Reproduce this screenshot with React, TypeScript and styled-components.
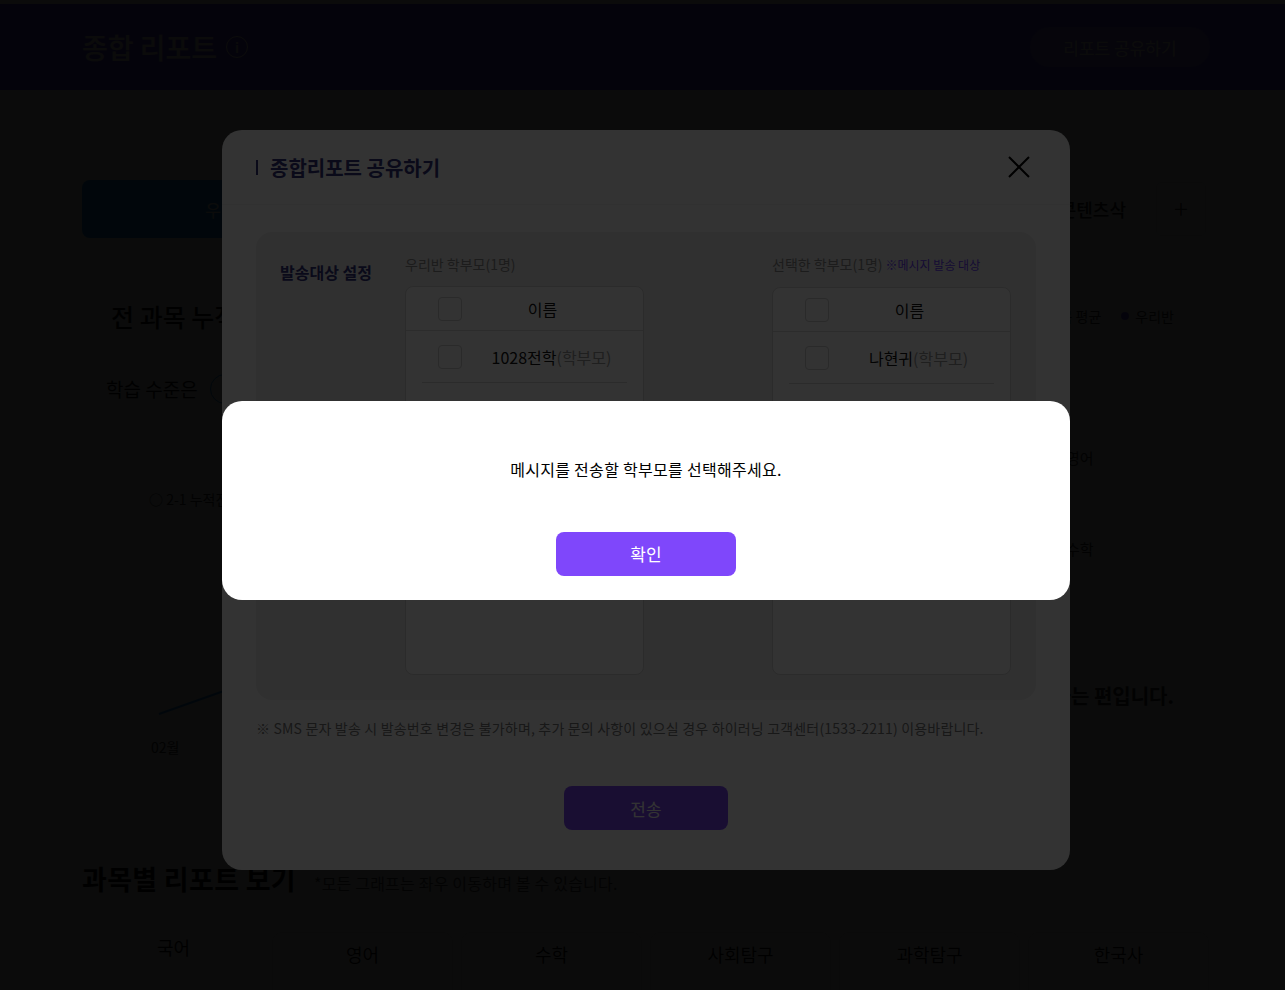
import styled, { createGlobalStyle } from "styled-components";

const GlobalStyle = createGlobalStyle`
  html, body {
    margin: 0;
    padding: 0;
  }
  body {
    background: #eff4f5;
    font-family: "Noto Sans CJK KR", "Noto Sans", sans-serif;
    color: #111;
  }
  * {
    box-sizing: border-box;
  }
`;

/* ---------- report page (behind the dialogs) ---------- */

const TopStrip = styled.div`
  height: 4px;
  background: #f7f7f7;
`;

const HeaderBar = styled.header`
  height: 86px;
  background: #6a55ee;
`;

const HeaderInner = styled.div`
  width: 1123px;
  height: 100%;
  margin: 0 auto;
  display: flex;
  align-items: center;
  justify-content: space-between;
`;

const PageTitle = styled.h1`
  margin: 0 0 0 1px;
  display: flex;
  align-items: center;
  gap: 9px;
  font-size: 28px;
  font-weight: 500;
  color: #fff;
`;

const InfoIcon = styled.span`
  width: 22px;
  height: 22px;
  border: 1.5px solid #fff;
  border-radius: 50%;
  display: flex;
  align-items: center;
  justify-content: center;
  font-size: 14px;
  line-height: 1;
`;

const ShareButton = styled.button`
  width: 180px;
  height: 40px;
  margin-right: -6px;
  border: none;
  border-radius: 20px;
  background: rgba(255, 255, 255, 0.16);
  color: #fff;
  font-family: inherit;
  font-size: 17px;
`;

const Main = styled.main`
  width: 1123px;
  margin: 0 auto;
`;

const TabRow = styled.div`
  margin-top: 90px;
  height: 58px;
  display: flex;
  align-items: center;
`;

const ClassTab = styled.div<{ $active?: boolean }>`
  width: 344px;
  height: 58px;
  margin-left: 1px;
  border-radius: 8px;
  display: flex;
  align-items: center;
  justify-content: center;
  font-size: 17px;
  background: ${(p) => (p.$active ? "#1a93ef" : "transparent")};
  color: ${(p) => (p.$active ? "#fff" : "#222")};
`;

const TabSpacer = styled.div`
  flex: 1;
`;

const TextTab = styled.div`
  font-size: 18px;
  font-weight: 500;
  color: #222;
  margin-right: 30px;
`;

const AddBox = styled.div`
  width: 50px;
  height: 54px;
  margin-right: -2px;
  border-radius: 6px;
  background: #fff;
  border: 1px solid #e3e3e3;
  display: flex;
  align-items: center;
  justify-content: center;
  padding-bottom: 3px;
  font-size: 26px;
  font-weight: 300;
  color: #333;
`;

const ReportCard = styled.section`
  margin-top: 32px;
  padding: 30px 30px 0 25px;
`;

const CardHead = styled.div`
  height: 32px;
  display: flex;
  align-items: center;
  justify-content: space-between;
`;

const CardTitle = styled.h2`
  margin: 0;
  padding-left: 5px;
  font-size: 25px;
  font-weight: 500;
`;

const Legend = styled.div`
  display: flex;
  gap: 20px;
  font-size: 14px;
  color: #333;
`;

const LegendItem = styled.span<{ $color: string }>`
  display: flex;
  align-items: center;
  gap: 6px;
  &::before {
    content: "";
    width: 8px;
    height: 8px;
    border-radius: 50%;
    background: ${(p) => p.$color};
  }
`;

const SummaryLine = styled.p`
  margin: 42px 0 0;
  line-height: 28px;
  font-size: 19px;
  display: flex;
  align-items: center;
`;

const LevelPill = styled.span`
  margin-left: 12px;
  height: 30px;
  padding: 0 14px;
  border: 1.5px solid #1a93ef;
  border-radius: 15px;
  font-size: 16px;
  color: #1a93ef;
  display: flex;
  align-items: center;
`;

const ChartArea = styled.div`
  position: relative;
  margin: 18px -30px 0 -25px;
  height: 370px;
`;

const ChartSvg = styled.svg`
  position: absolute;
  left: 0;
  top: 0;
`;

const ChartLabel = styled.span<{ $size?: number; $bold?: boolean }>`
  position: absolute;
  font-size: ${(p) => p.$size || 14}px;
  font-weight: ${(p) => (p.$bold ? 700 : 400)};
  line-height: 1.2;
  color: #333;
  white-space: nowrap;
`;

const SectionHead = styled.div`
  margin-top: 69px;
  margin-left: 1px;
  display: flex;
  align-items: baseline;
  gap: 18px;
`;

const SectionTitle = styled.h2`
  margin: 0;
  font-size: 27px;
  font-weight: 700;
  letter-spacing: 0.3px;
  line-height: 36px;
`;

const SectionNote = styled.span`
  font-size: 16px;
  letter-spacing: 0.2px;
  color: #555;
`;

const SubjectGrid = styled.div`
  margin: 35px -5px 0 2px;
  display: grid;
  grid-template-columns: repeat(6, 1fr);
  gap: 8px;
`;

const SubjectTab = styled.div<{ $active?: boolean }>`
  height: 70px;
  border-radius: 10px;
  display: flex;
  justify-content: center;
  font-size: 18px;
  line-height: 24px;
  padding-top: ${(p) => (p.$active ? 2 : 9)}px;
  background: ${(p) => (p.$active ? "transparent" : "#fff")};
  border: 1px solid ${(p) => (p.$active ? "transparent" : "#e6e6e6")};
`;

/* ---------- share dialog ---------- */

const Overlay = styled.div<{ $dim: number; $z: number }>`
  position: fixed;
  inset: 0;
  z-index: ${(p) => p.$z};
  background: rgba(0, 0, 0, ${(p) => p.$dim});
  display: flex;
  align-items: center;
  justify-content: center;
  padding: 10px 0 0 7px;
`;

const Modal = styled.div`
  width: 848px;
  height: 740px;
  background: #fff;
  border-radius: 20px;
  padding: 0 34px;
  display: flex;
  flex-direction: column;
`;

const ModalHeader = styled.div`
  height: 75px;
  display: flex;
  align-items: center;
  justify-content: space-between;
  border-bottom: 1px solid #f2f2f2;
  margin: 0 -34px;
  padding: 0 40px 0 34px;
`;

const ModalTitle = styled.h3`
  margin: 0;
  display: flex;
  align-items: center;
  font-size: 20px;
  font-weight: 700;
  color: #34347f;
  &::before {
    content: "";
    width: 2px;
    height: 15px;
    margin-right: 12px;
    background: #34347f;
  }
`;

const CloseButton = styled.button`
  width: 22px;
  height: 22px;
  padding: 0;
  border: none;
  background: none;
  display: flex;
`;

const TargetBox = styled.div`
  margin-top: 27px;
  height: 468px;
  border-radius: 16px;
  background: #f0f0f0;
  padding: 22px 25px 25px 24px;
  display: flex;
`;

const TargetLabel = styled.div`
  width: 125px;
  margin-top: 6px;
  font-size: 16px;
  font-weight: 700;
  line-height: 24px;
  color: #34347f;
`;

const ListColumn = styled.div`
  width: 239px;
  display: flex;
  flex-direction: column;
  & + & {
    margin-left: 128px;
  }
`;

const ListCaption = styled.div`
  font-size: 14px;
  line-height: 20px;
  color: #8a8a8a;
  margin-bottom: 12px;
  white-space: nowrap;
`;

const CaptionNote = styled.span`
  margin-left: 3px;
  font-size: 12px;
  color: #6a3cff;
`;

const ListBox = styled.div`
  flex: 1;
  background: #fff;
  border: 1px solid #d6d6d6;
  border-radius: 8px;
  overflow: hidden;
`;

const HeadRow = styled.div`
  height: 44px;
  display: flex;
  align-items: center;
  padding: 0 20px 0 32px;
  border-bottom: 1px solid #dcdcdc;
`;

const ItemRow = styled.div`
  height: 52px;
  margin: 0 16px;
  display: flex;
  align-items: center;
  padding-left: 16px;
  border-bottom: 1px solid #d8d8d8;
`;

const CheckBox = styled.span`
  flex: none;
  width: 24px;
  height: 24px;
  border: 1px solid #cfcfcf;
  border-radius: 4px;
  background: #fff;
`;

const NameCell = styled.div<{ $pad?: number }>`
  flex: 1;
  text-align: center;
  padding-left: ${(p) => p.$pad || 0}px;
  font-size: 16px;
  color: #111;
  white-space: nowrap;
`;

const Relation = styled.span`
  color: #999;
`;

const Notice = styled.p`
  margin: 18px 0 0;
  font-size: 14px;
  line-height: 20px;
  color: #777;
  letter-spacing: 0.18px;
  white-space: nowrap;
`;

const PrimaryButton = styled.button<{ $w: number }>`
  width: ${(p) => p.$w}px;
  height: 44px;
  border: none;
  border-radius: 8px;
  background: #7f47fb;
  color: #fff;
  font-family: inherit;
  font-size: 17px;
  align-self: center;
`;

const SendButton = styled(PrimaryButton)`
  margin-top: 48px;
`;

/* ---------- alert ---------- */

const AlertBox = styled.div`
  width: 848px;
  height: 199px;
  background: #fff;
  border-radius: 20px;
  padding: 56px 0 24px;
  display: flex;
  flex-direction: column;
  align-items: center;
`;

const AlertText = styled.p`
  margin: 0;
  font-size: 16px;
  line-height: 24px;
  letter-spacing: 0.3px;
  color: #000;
`;

const ConfirmButton = styled(PrimaryButton)`
  margin-top: 51px;
`;

const subjects = ["국어", "영어", "수학", "사회탐구", "과학탐구", "한국사"];

export default function App() {
  return (
    <>
      <GlobalStyle />
      <TopStrip />
      <HeaderBar>
        <HeaderInner>
          <PageTitle>
            종합 리포트 <InfoIcon>i</InfoIcon>
          </PageTitle>
          <ShareButton>리포트 공유하기</ShareButton>
        </HeaderInner>
      </HeaderBar>

      <Main>
        <TabRow>
          <ClassTab $active>우리반 리포트</ClassTab>
          <TabSpacer />
          <TextTab>콘텐츠삭</TextTab>
          <AddBox>+</AddBox>
        </TabRow>

        <ReportCard>
          <CardHead>
            <CardTitle>전 과목 누적 학습 현황</CardTitle>
            <Legend>
              <LegendItem $color="#9aa6b2">전과목 평균</LegendItem>
              <LegendItem $color="#6a55ee">우리반</LegendItem>
            </Legend>
          </CardHead>
          <SummaryLine>
            학습 수준은 <LevelPill>상위 20%</LevelPill>
          </SummaryLine>
          <ChartArea>
            <ChartSvg width="900" height="370" viewBox="0 0 900 370">
              <polyline
                points="78,292 140,270 260,230 420,190 600,160"
                fill="none"
                stroke="#1a93ef"
                strokeWidth="2"
              />
            </ChartSvg>
            <ChartLabel style={{ left: 68, top: 69 }}>○ 2-1 누적진도</ChartLabel>
            <ChartLabel style={{ left: 70, top: 317 }}>02월</ChartLabel>
            <ChartLabel style={{ left: 985, top: 27 }} $size={15}>
              영어
            </ChartLabel>
            <ChartLabel style={{ left: 985, top: 118 }} $size={15}>
              수학
            </ChartLabel>
            <ChartLabel style={{ right: 30, top: 262 }} $size={20} $bold>
              평균보다 잘하는 편입니다.
            </ChartLabel>
          </ChartArea>
        </ReportCard>

        <SectionHead>
          <SectionTitle>과목별 리포트 보기</SectionTitle>
          <SectionNote>*모든 그래프는 좌우 이동하며 볼 수 있습니다.</SectionNote>
        </SectionHead>
        <SubjectGrid>
          {subjects.map((s, i) => (
            <SubjectTab key={s} $active={i === 0}>
              {s}
            </SubjectTab>
          ))}
        </SubjectGrid>
      </Main>

      <Overlay $dim={0.77} $z={10}>
        <Modal>
          <ModalHeader>
            <ModalTitle>종합리포트 공유하기</ModalTitle>
            <CloseButton aria-label="닫기">
              <svg width="22" height="22" viewBox="0 0 22 22">
                <path d="M1 1 L21 21 M21 1 L1 21" stroke="#000" strokeWidth="2" fill="none" />
              </svg>
            </CloseButton>
          </ModalHeader>

          <TargetBox>
            <TargetLabel>발송대상 설정</TargetLabel>
            <ListColumn>
              <ListCaption>우리반 학부모(1명)</ListCaption>
              <ListBox>
                <HeadRow>
                  <CheckBox />
                  <NameCell>이름</NameCell>
                </HeadRow>
                <ItemRow>
                  <CheckBox />
                  <NameCell $pad={14}>
                    1028전학<Relation>(학부모)</Relation>
                  </NameCell>
                </ItemRow>
              </ListBox>
            </ListColumn>
            <ListColumn>
              <ListCaption>
                선택한 학부모(1명)<CaptionNote>※메시지 발송 대상</CaptionNote>
              </ListCaption>
              <ListBox>
                <HeadRow>
                  <CheckBox />
                  <NameCell>이름</NameCell>
                </HeadRow>
                <ItemRow>
                  <CheckBox />
                  <NameCell $pad={14}>
                    나현귀<Relation>(학부모)</Relation>
                  </NameCell>
                </ItemRow>
              </ListBox>
            </ListColumn>
          </TargetBox>

          <Notice>
            ※ SMS 문자 발송 시 발송번호 변경은 불가하며, 추가 문의 사항이 있으실 경우 하이러닝 고객센터(1533-2211) 이용바랍니다.
          </Notice>
          <SendButton $w={164}>전송</SendButton>
        </Modal>
      </Overlay>

      <Overlay $dim={0.8} $z={20}>
        <AlertBox>
          <AlertText>메시지를 전송할 학부모를 선택해주세요.</AlertText>
          <ConfirmButton $w={180}>확인</ConfirmButton>
        </AlertBox>
      </Overlay>
    </>
  );
}
